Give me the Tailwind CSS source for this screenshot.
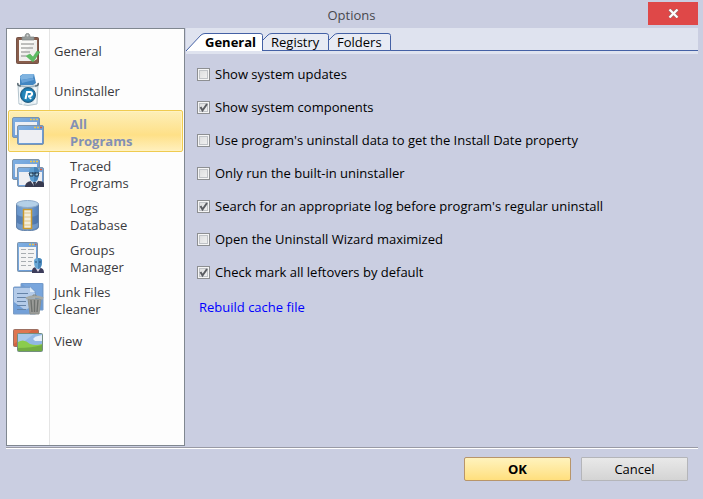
<!DOCTYPE html>
<html lang="en">
<head>
<meta charset="utf-8">
<meta name="viewport" content="width=device-width, initial-scale=1">
<title>Options</title>
<script src="https://cdn.jsdelivr.net/npm/@tailwindcss/browser@4"></script>
</head>
<body class="min-h-screen bg-[#cacee1] font-['Open_Sans','Noto_Sans',sans-serif] text-[13px] leading-[17px] text-black">
<svg class="absolute size-0" aria-hidden="true">
  <defs>
    <linearGradient id="blue" x1="0" y1="0" x2="1" y2="1"><stop offset="0" stop-color="#7fb0e3"/><stop offset="1" stop-color="#6595d2"/></linearGradient>
    <linearGradient id="db" x1="0" x2="1" y1="0" y2="0"><stop offset="0" stop-color="#6793c8"/><stop offset=".45" stop-color="#7ba8da"/><stop offset="1" stop-color="#5580b8"/></linearGradient>
    <symbol id="windows" viewBox="0 0 32 28">
      <rect x=".5" y=".5" width="27" height="20" rx="1.500" fill="url(#blue)" stroke="#7c93ab"/>
      <rect x="3" y="5" width="22" height="13" fill="#eceff4"/>
      <path d="M18 2.500h2M21 2.500h2M24 2.500h2" stroke="#e8c34e" stroke-width="1.500"/>
      <rect x="5.500" y="8.500" width="26" height="19" rx="1.500" fill="url(#blue)" stroke="#7c93ab"/>
      <rect x="7" y="13" width="23" height="13" fill="#eeeff3"/>
      <path d="M22 10.500h2M25 10.500h2" stroke="#e8c34e" stroke-width="1.500"/><path d="M28 10.500h2" stroke="#d95c38" stroke-width="1.500"/>
    </symbol>
  </defs>
</svg>
<div class="flex min-h-screen flex-col">
  <header class="grid h-7 grid-cols-[1fr_auto_1fr] items-start">
    <h1 class="col-start-2 pt-[7px] text-[#48484e]">Options</h1>
    <button type="button" aria-label="Close" class="mt-[2px] mr-[5px] grid h-[23px] w-[50px] place-items-center justify-self-end bg-[#df4848]">
      <svg class="h-[9px] w-[11px]" viewBox="0 0 11 9"><path d="M1.500 .5l8 8M9.500 .5l-8 8" stroke="#99696c" stroke-width="3.500"/><path d="M1.500 .5l8 8M9.500 .5l-8 8" stroke="#fff" stroke-width="2.200"/></svg>
    </button>
  </header>

  <main class="mr-[5px] ml-[6px] flex flex-1 border-b border-[#999aa5] pb-px">
    <nav aria-label="Option pages" class="w-[179px] shrink-0 border border-[#808790] bg-[linear-gradient(90deg,#fff_42px,#e5e5e5_42px,#e5e5e5_43px,#fdfdfd_43px)] px-px pt-px text-[#3a3a3e]">
      <ul>
        <li><a href="#general" class="relative flex h-10 items-center pt-[3px] pl-[46px]">
          <svg class="absolute top-[3px] left-[8px] h-[31px] w-6" viewBox="0 0 24 31"><rect x=".5" y="4.500" width="22" height="26" rx="1" fill="#895d4b" stroke="#735247"/><path d="M3 7h18v19l-3 2H3z" fill="#efefed"/><path d="M3 7h17L3 23z" fill="#faf9f7"/><path d="M6 7V4h3c0-5 5-5 5 0h4v3z" fill="#979d9c" stroke="#7e8484" stroke-width=".7"/><circle cx="11.500" cy="2.500" r="1" fill="#d5d8d8"/><path d="M5 11h13M5 15h12M5 19h9M5 23h5" stroke="#aaaba9" stroke-width="1.300"/><path d="M10 23l4-2 3 3 4-6 3 1-7 10z" fill="#5dbd63" stroke="#49a951" stroke-width=".5"/></svg>
          General</a></li>
        <li><a href="#uninstaller" class="relative flex h-10 items-center pt-[3px] pl-[46px]">
          <svg class="absolute top-[3px] left-[9px] h-[33px] w-[22px]" viewBox="0 0 22 33"><path d="M1 12h20l-1 19q-9 3-18 0z" fill="#e4eef3" stroke="#b4c4cd"/><path d="M3 15v15M6 14v18M18 15v15" stroke="#fff"/><path d="M3 3l3-2 11 0 2 9-3 2H3z" fill="#4286c2"/><path d="M3 4l3-3h11l-1 4-12 2z" fill="#7fb3e0"/><path d="M4 7l12-2 1 2-12 3z" fill="#68a2d8"/><path d="M1 10q-1 3 3 3M21 10q1 3-3 3" fill="none" stroke="#55656f" stroke-width="1.500"/><path d="M4 13q7 2 14 0" fill="none" stroke="#9fb6c4" stroke-width="1.500"/><circle cx="11" cy="22" r="7.500" fill="#1772a8" stroke="#2a5f80"/><circle cx="11" cy="22" r="6" fill="#2486ba"/><path d="M8.500 26l1.500-7h3q2.500 0 2 2.500-1 2-4 2m1 0l2 2.500" fill="none" stroke="#fff" stroke-width="2"/></svg>
          Uninstaller</a></li>
        <li><a href="#all-programs" aria-current="page" class="relative flex h-[42px] items-center rounded-[2px] border border-[#efcb50] bg-linear-to-b from-[#fdefb8] via-[#fee087] via-60% to-[#fff0bd] pt-[3px] pl-[61px] font-bold text-[#8390b5] shadow-[inset_0_0_0_1px_#fff2c2]">
          <svg class="absolute top-[6px] left-[3px] h-7 w-8"><use href="#windows"/></svg>
          <span class="w-20">All<br>Programs</span></a></li>
        <li><a href="#traced" class="relative flex h-[42px] items-center pt-[3px] pl-[62px]">
          <svg class="absolute top-[7px] left-[4px] h-7 w-8" viewBox="0 0 32 28"><use href="#windows" width="32" height="28"/><path d="M13 28q0-5 6-6l3-2 5 2q5 0 5 3v3z" fill="#383b51"/><path d="M18 21l4 6 5-6z" fill="#dfe4ec"/><path d="M21 23h3l-1 5h-1z" fill="#333a50"/><path d="M17 13q0-5 5-5t5 5q0 10-5 10t-5-10" fill="#5d9ed0"/><path d="M22 8q5 0 5 5 0 9-5 10z" fill="#4683b8"/><path d="M17 14h4v3h-3zM23 14h4l-1 3h-3zM20 14h4" fill="#98c5df" stroke="#20334b" stroke-width=".9"/></svg>
          <span class="w-20">Traced<br>Programs</span></a></li>
        <li><a href="#logs" class="relative flex h-[42px] items-center pt-[3px] pl-[62px]">
          <svg class="absolute top-[6px] left-[8px] h-[31px] w-6" viewBox="0 0 24 31"><path d="M.5 4v23c0 5 22 5 22 0V4z" fill="url(#db)" stroke="#6482a8"/><path d="M1 14c0 4 21 4 21 0v12c0 5-21 5-21 0z" fill="#3f669c" opacity=".5"/><path d="M1 22c0 4 21 4 21 0v4c0 5-21 5-21 0z" fill="#90b5df" opacity=".5"/><ellipse cx="11.500" cy="4" rx="11" ry="3.500" fill="#b4d0e8" stroke="#8fabca"/><path d="M7.500 9.500h8v19h-8z" fill="#f4eedb" stroke="#c99a30" stroke-width="1.500"/><path d="M8 13h7M8 17h7M8 21h7M8 25h7" stroke="#dfc486"/></svg>
          <span class="w-20">Logs<br>Database</span></a></li>
        <li><a href="#groups" class="relative flex h-[42px] items-center pt-[3px] pl-[62px]">
          <svg class="absolute top-[6px] left-[9px] h-[31px] w-[27px]" viewBox="0 0 27 31"><rect x=".5" y=".5" width="20" height="29" rx="1" fill="url(#blue)" stroke="#7c93ab"/><path d="M2 5h17v23H2z" fill="#f4f4f4"/><path d="M12 2.500h2M15 2.500h2" stroke="#e9c44c" stroke-width="1.500"/><path d="M18 2.500h1.500" stroke="#db6445" stroke-width="1.500"/><path d="M4 7.500h5M11 7.500h6M4 11.500h5M11 11.500h6M4 15.500h5M11 15.500h5M4 19.500h5M11 19.500h4M4 23.500h5M11 23.500h3" stroke="#a8adb1"/><path d="M15 29q0-4 5-4l3 1q4 0 4 5H15z" fill="#3d3d5b"/><path d="M18 25l3 5 3-5z" fill="#ddd7e7"/><path d="M17 19q0-3 4-3t4 3q0 8-4 8t-4-8" fill="#69a8d6"/><path d="M21 16q4 0 4 3 0 7-4 8z" fill="#4887bb"/><path d="M18 20h2M22 20h2" stroke="#284e76"/></svg>
          <span class="w-20">Groups<br>Manager</span></a></li>
        <li><a href="#junk" class="relative flex h-[42px] items-center pt-[3px] pl-[46px]">
          <svg class="absolute top-[5px] left-[5px] h-8 w-[31px]" viewBox="0 0 31 32"><path d="M8 1q0-1 1-1h20q1 0 1 1v26H8z" fill="#6b9bd6" stroke="#7d9dc6"/><path d="M9 1h20v16z" fill="#79a6dd"/><path d="M.5 5q0-1 1-1h16l5 5v22H.5z" fill="#73a0d8" stroke="#7d9dc6"/><path d="M1 5h16l5 5v12L12 27 1 19z" fill="#b4cbe9"/><path d="M17 4v5h5z" fill="#dce9f6"/><path d="M4 10.500h11M4 14.500h10M4 18.500h9M4 22.500h9M4 26.500h9" stroke="#6583a8"/><path d="M15 16h13l-2 15H17z" fill="#9b9c99" stroke="#8d908b"/><path d="M18 17l1 12M21.500 17v12M25 17l-1 12" stroke="#6d716e" stroke-width="1.400"/><path d="M13 15.500q8-4 17 0" fill="none" stroke="#a6aaa6" stroke-width="2.500"/><path d="M20 13v-1h3v1" stroke="#848984" fill="none"/></svg>
          <span class="w-24">Junk Files<br>Cleaner</span></a></li>
        <li><a href="#view" class="relative flex h-10 items-center pt-[3px] pl-[46px]">
          <svg class="absolute top-[9px] left-[5px] h-[23px] w-[31px]" viewBox="0 0 31 23"><rect x=".5" y=".5" width="25" height="17" rx="1" fill="#d16442" stroke="#9d7062"/><path d="M1 1h18L1 15z" fill="#df7650"/><rect x="4.500" y="4.500" width="25" height="18" rx="1" fill="#91b7e5" stroke="#748f7f"/><path d="M5 5h16L5 17z" fill="#a9c8ea"/><path d="M20 10q2-3 5-3l4-1v6h-7z" fill="#e4eef9"/><path d="M5 13q6-4 12 2 6 2 12 0v7H5z" fill="#8bcc4d"/><path d="M5 19q14 0 24-3v6H5z" fill="#72ac43"/></svg>
          View</a></li>
      </ul>
    </nav>

    <section class="ml-px min-w-0 flex-1">
      <div role="tablist" class="flex h-[26px] items-start bg-[linear-gradient(#dfe3ef_22px,#4461a5_22px,#4461a5_23px,#dfe3ef_23px)] pt-[5px]">
        <button type="button" role="tab" aria-selected="true" class="relative h-[18px] w-[77px] pl-[19px] text-left font-bold">
          <svg class="absolute inset-0 size-full" viewBox="0 0 77 18"><path d="M0 18L15 2q2-1.500 4-1.500h55q2.500 0 2.500 2V18" fill="#fff" stroke="#4461a5"/></svg><span class="relative">General</span></button>
        <button type="button" role="tab" aria-selected="false" class="relative h-[18px] w-[66px] pl-2 text-left">
          <svg class="absolute inset-0 size-full" viewBox="0 0 66 18"><path d="M0 7l5-5q1.500-1.500 4-1.500h54q2.500 0 2.500 2V17.500H0z" fill="#e8ebf4"/><path d="M0 7l5-5q1.500-1.500 4-1.500h54q2.500 0 2.500 2V17.500H0" fill="none" stroke="#4461a5"/></svg><span class="relative">Registry</span></button>
        <button type="button" role="tab" aria-selected="false" class="relative h-[18px] w-[62px] pl-2 text-left">
          <svg class="absolute inset-0 size-full" viewBox="0 0 62 18"><path d="M0 7l5-5q1.500-1.500 4-1.500h50q2.500 0 2.500 2V17.500H0" fill="#e8ebf4" stroke="#4461a5"/></svg><span class="relative">Folders</span></button>
      </div>
      <form class="grid auto-rows-[33px] items-center justify-items-start pt-1 pl-[11px]">
        <label class="flex items-center gap-[5px]"><span class="grid pb-px"><input type="checkbox" class="peer col-start-1 row-start-1 size-[13px] appearance-none border border-[#8d8f92] bg-linear-to-br from-[#dadbdc] to-[#f4f4f4] shadow-[inset_0_0_0_1px_#f6f6f6,inset_0_0_0_2px_#c0c3c7]"><svg class="pointer-events-none invisible col-start-1 row-start-1 size-[13px] peer-checked:visible" viewBox="0 0 13 13"><path d="M3.500 6l2 3.500L10 3" fill="none" stroke="#5b5d62" stroke-width="2"/></svg></span>Show system updates</label>
        <label class="flex items-center gap-[5px]"><span class="grid pb-px"><input type="checkbox" checked class="peer col-start-1 row-start-1 size-[13px] appearance-none border border-[#8d8f92] bg-linear-to-br from-[#dadbdc] to-[#f4f4f4] shadow-[inset_0_0_0_1px_#f6f6f6,inset_0_0_0_2px_#c0c3c7]"><svg class="pointer-events-none invisible col-start-1 row-start-1 size-[13px] peer-checked:visible" viewBox="0 0 13 13"><path d="M3.500 6l2 3.500L10 3" fill="none" stroke="#5b5d62" stroke-width="2"/></svg></span>Show system components</label>
        <label class="flex items-center gap-[5px]"><span class="grid pb-px"><input type="checkbox" class="peer col-start-1 row-start-1 size-[13px] appearance-none border border-[#8d8f92] bg-linear-to-br from-[#dadbdc] to-[#f4f4f4] shadow-[inset_0_0_0_1px_#f6f6f6,inset_0_0_0_2px_#c0c3c7]"><svg class="pointer-events-none invisible col-start-1 row-start-1 size-[13px] peer-checked:visible" viewBox="0 0 13 13"><path d="M3.500 6l2 3.500L10 3" fill="none" stroke="#5b5d62" stroke-width="2"/></svg></span>Use program's uninstall data to get the Install Date property</label>
        <label class="flex items-center gap-[5px]"><span class="grid pb-px"><input type="checkbox" class="peer col-start-1 row-start-1 size-[13px] appearance-none border border-[#8d8f92] bg-linear-to-br from-[#dadbdc] to-[#f4f4f4] shadow-[inset_0_0_0_1px_#f6f6f6,inset_0_0_0_2px_#c0c3c7]"><svg class="pointer-events-none invisible col-start-1 row-start-1 size-[13px] peer-checked:visible" viewBox="0 0 13 13"><path d="M3.500 6l2 3.500L10 3" fill="none" stroke="#5b5d62" stroke-width="2"/></svg></span>Only run the built-in uninstaller</label>
        <label class="flex items-center gap-[5px]"><span class="grid pb-px"><input type="checkbox" checked class="peer col-start-1 row-start-1 size-[13px] appearance-none border border-[#8d8f92] bg-linear-to-br from-[#dadbdc] to-[#f4f4f4] shadow-[inset_0_0_0_1px_#f6f6f6,inset_0_0_0_2px_#c0c3c7]"><svg class="pointer-events-none invisible col-start-1 row-start-1 size-[13px] peer-checked:visible" viewBox="0 0 13 13"><path d="M3.500 6l2 3.500L10 3" fill="none" stroke="#5b5d62" stroke-width="2"/></svg></span>Search for an appropriate log before program's regular uninstall</label>
        <label class="flex items-center gap-[5px]"><span class="grid pb-px"><input type="checkbox" class="peer col-start-1 row-start-1 size-[13px] appearance-none border border-[#8d8f92] bg-linear-to-br from-[#dadbdc] to-[#f4f4f4] shadow-[inset_0_0_0_1px_#f6f6f6,inset_0_0_0_2px_#c0c3c7]"><svg class="pointer-events-none invisible col-start-1 row-start-1 size-[13px] peer-checked:visible" viewBox="0 0 13 13"><path d="M3.500 6l2 3.500L10 3" fill="none" stroke="#5b5d62" stroke-width="2"/></svg></span>Open the Uninstall Wizard maximized</label>
        <label class="flex items-center gap-[5px]"><span class="grid pb-px"><input type="checkbox" checked class="peer col-start-1 row-start-1 size-[13px] appearance-none border border-[#8d8f92] bg-linear-to-br from-[#dadbdc] to-[#f4f4f4] shadow-[inset_0_0_0_1px_#f6f6f6,inset_0_0_0_2px_#c0c3c7]"><svg class="pointer-events-none invisible col-start-1 row-start-1 size-[13px] peer-checked:visible" viewBox="0 0 13 13"><path d="M3.500 6l2 3.500L10 3" fill="none" stroke="#5b5d62" stroke-width="2"/></svg></span>Check mark all leftovers by default</label>
        <a href="#rebuild" class="pt-[3px] pl-[2px] text-[#0000ff]">Rebuild cache file</a>
      </form>
    </section>
  </main>

  <footer class="mr-[5px] ml-[6px] flex justify-end gap-[10px] border-t border-white pt-2 pr-[10px] pb-[18px]">
    <button type="submit" class="h-6 w-[107px] rounded-[2px] border border-[#b8956a] bg-linear-to-b from-[#fff3bd] to-[#ffdf7d] font-bold">OK</button>
    <button type="button" class="h-6 w-[107px] rounded-[1px] border border-[#b4b5b9] bg-linear-to-b from-[#e9e9e9] to-[#d4d4d4]">Cancel</button>
  </footer>
</div>
</body>
</html>
